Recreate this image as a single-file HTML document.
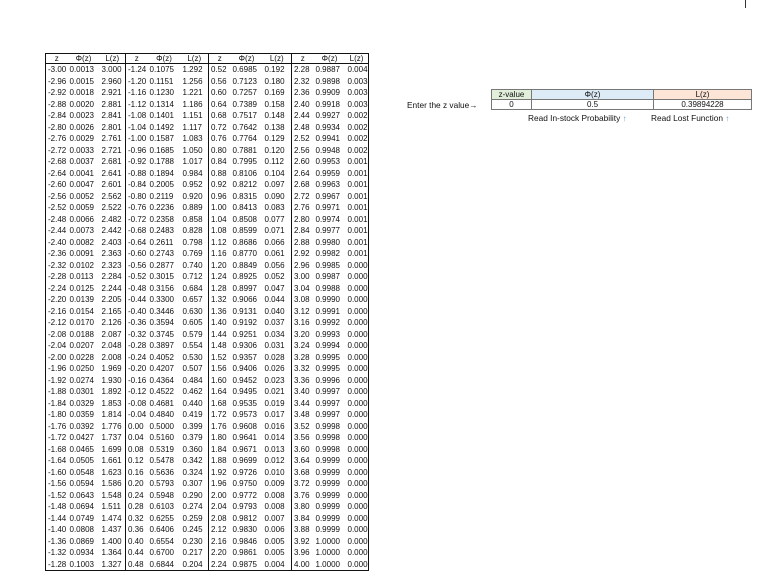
<!DOCTYPE html>
<html><head><meta charset="utf-8"><style>
body{margin:0;width:761px;height:584px;background:#fff;position:relative;overflow:hidden;font-family:"Liberation Sans",sans-serif;color:#111}
#t{position:absolute;left:45px;top:53px;border-collapse:collapse;border:1.5px solid #111;font-size:8px;table-layout:fixed}
#t td{padding:0 0 0 2px;height:11.5px;line-height:11.5px;white-space:nowrap;text-align:left}
#t tr.h td{height:9px;line-height:9px;text-align:center;border-bottom:1px solid #111;padding:0}
#t td.g{border-left:1.5px solid #111}
#w{position:absolute;left:491px;top:89px;border-collapse:collapse;font-size:8px;table-layout:fixed}
#w td{border:1px solid #777;text-align:center;height:9px;line-height:9px;padding:0}
.lab{position:absolute;font-size:8.3px;white-space:nowrap}
</style></head><body>
<div style="position:absolute;left:745px;top:0;width:1px;height:8px;background:#333"></div>
<table id="t">
<colgroup><col style="width:22px"><col style="width:32px"><col style="width:26px"><col style="width:22px"><col style="width:33px"><col style="width:28px"><col style="width:22px"><col style="width:32px"><col style="width:29px"><col style="width:22px"><col style="width:32px"><col style="width:20px"></colgroup>
<tr class="h"><td>z</td><td>Φ(z)</td><td>L(z)</td><td class="g">z</td><td>Φ(z)</td><td>L(z)</td><td class="g">z</td><td>Φ(z)</td><td>L(z)</td><td class="g">z</td><td>Φ(z)</td><td>L(z)</td></tr>
<tr><td>-3.00</td><td>0.0013</td><td>3.000</td><td class="g">-1.24</td><td>0.1075</td><td>1.292</td><td class="g">0.52</td><td>0.6985</td><td>0.192</td><td class="g">2.28</td><td>0.9887</td><td>0.004</td></tr>
<tr><td>-2.96</td><td>0.0015</td><td>2.960</td><td class="g">-1.20</td><td>0.1151</td><td>1.256</td><td class="g">0.56</td><td>0.7123</td><td>0.180</td><td class="g">2.32</td><td>0.9898</td><td>0.003</td></tr>
<tr><td>-2.92</td><td>0.0018</td><td>2.921</td><td class="g">-1.16</td><td>0.1230</td><td>1.221</td><td class="g">0.60</td><td>0.7257</td><td>0.169</td><td class="g">2.36</td><td>0.9909</td><td>0.003</td></tr>
<tr><td>-2.88</td><td>0.0020</td><td>2.881</td><td class="g">-1.12</td><td>0.1314</td><td>1.186</td><td class="g">0.64</td><td>0.7389</td><td>0.158</td><td class="g">2.40</td><td>0.9918</td><td>0.003</td></tr>
<tr><td>-2.84</td><td>0.0023</td><td>2.841</td><td class="g">-1.08</td><td>0.1401</td><td>1.151</td><td class="g">0.68</td><td>0.7517</td><td>0.148</td><td class="g">2.44</td><td>0.9927</td><td>0.002</td></tr>
<tr><td>-2.80</td><td>0.0026</td><td>2.801</td><td class="g">-1.04</td><td>0.1492</td><td>1.117</td><td class="g">0.72</td><td>0.7642</td><td>0.138</td><td class="g">2.48</td><td>0.9934</td><td>0.002</td></tr>
<tr><td>-2.76</td><td>0.0029</td><td>2.761</td><td class="g">-1.00</td><td>0.1587</td><td>1.083</td><td class="g">0.76</td><td>0.7764</td><td>0.129</td><td class="g">2.52</td><td>0.9941</td><td>0.002</td></tr>
<tr><td>-2.72</td><td>0.0033</td><td>2.721</td><td class="g">-0.96</td><td>0.1685</td><td>1.050</td><td class="g">0.80</td><td>0.7881</td><td>0.120</td><td class="g">2.56</td><td>0.9948</td><td>0.002</td></tr>
<tr><td>-2.68</td><td>0.0037</td><td>2.681</td><td class="g">-0.92</td><td>0.1788</td><td>1.017</td><td class="g">0.84</td><td>0.7995</td><td>0.112</td><td class="g">2.60</td><td>0.9953</td><td>0.001</td></tr>
<tr><td>-2.64</td><td>0.0041</td><td>2.641</td><td class="g">-0.88</td><td>0.1894</td><td>0.984</td><td class="g">0.88</td><td>0.8106</td><td>0.104</td><td class="g">2.64</td><td>0.9959</td><td>0.001</td></tr>
<tr><td>-2.60</td><td>0.0047</td><td>2.601</td><td class="g">-0.84</td><td>0.2005</td><td>0.952</td><td class="g">0.92</td><td>0.8212</td><td>0.097</td><td class="g">2.68</td><td>0.9963</td><td>0.001</td></tr>
<tr><td>-2.56</td><td>0.0052</td><td>2.562</td><td class="g">-0.80</td><td>0.2119</td><td>0.920</td><td class="g">0.96</td><td>0.8315</td><td>0.090</td><td class="g">2.72</td><td>0.9967</td><td>0.001</td></tr>
<tr><td>-2.52</td><td>0.0059</td><td>2.522</td><td class="g">-0.76</td><td>0.2236</td><td>0.889</td><td class="g">1.00</td><td>0.8413</td><td>0.083</td><td class="g">2.76</td><td>0.9971</td><td>0.001</td></tr>
<tr><td>-2.48</td><td>0.0066</td><td>2.482</td><td class="g">-0.72</td><td>0.2358</td><td>0.858</td><td class="g">1.04</td><td>0.8508</td><td>0.077</td><td class="g">2.80</td><td>0.9974</td><td>0.001</td></tr>
<tr><td>-2.44</td><td>0.0073</td><td>2.442</td><td class="g">-0.68</td><td>0.2483</td><td>0.828</td><td class="g">1.08</td><td>0.8599</td><td>0.071</td><td class="g">2.84</td><td>0.9977</td><td>0.001</td></tr>
<tr><td>-2.40</td><td>0.0082</td><td>2.403</td><td class="g">-0.64</td><td>0.2611</td><td>0.798</td><td class="g">1.12</td><td>0.8686</td><td>0.066</td><td class="g">2.88</td><td>0.9980</td><td>0.001</td></tr>
<tr><td>-2.36</td><td>0.0091</td><td>2.363</td><td class="g">-0.60</td><td>0.2743</td><td>0.769</td><td class="g">1.16</td><td>0.8770</td><td>0.061</td><td class="g">2.92</td><td>0.9982</td><td>0.001</td></tr>
<tr><td>-2.32</td><td>0.0102</td><td>2.323</td><td class="g">-0.56</td><td>0.2877</td><td>0.740</td><td class="g">1.20</td><td>0.8849</td><td>0.056</td><td class="g">2.96</td><td>0.9985</td><td>0.000</td></tr>
<tr><td>-2.28</td><td>0.0113</td><td>2.284</td><td class="g">-0.52</td><td>0.3015</td><td>0.712</td><td class="g">1.24</td><td>0.8925</td><td>0.052</td><td class="g">3.00</td><td>0.9987</td><td>0.000</td></tr>
<tr><td>-2.24</td><td>0.0125</td><td>2.244</td><td class="g">-0.48</td><td>0.3156</td><td>0.684</td><td class="g">1.28</td><td>0.8997</td><td>0.047</td><td class="g">3.04</td><td>0.9988</td><td>0.000</td></tr>
<tr><td>-2.20</td><td>0.0139</td><td>2.205</td><td class="g">-0.44</td><td>0.3300</td><td>0.657</td><td class="g">1.32</td><td>0.9066</td><td>0.044</td><td class="g">3.08</td><td>0.9990</td><td>0.000</td></tr>
<tr><td>-2.16</td><td>0.0154</td><td>2.165</td><td class="g">-0.40</td><td>0.3446</td><td>0.630</td><td class="g">1.36</td><td>0.9131</td><td>0.040</td><td class="g">3.12</td><td>0.9991</td><td>0.000</td></tr>
<tr><td>-2.12</td><td>0.0170</td><td>2.126</td><td class="g">-0.36</td><td>0.3594</td><td>0.605</td><td class="g">1.40</td><td>0.9192</td><td>0.037</td><td class="g">3.16</td><td>0.9992</td><td>0.000</td></tr>
<tr><td>-2.08</td><td>0.0188</td><td>2.087</td><td class="g">-0.32</td><td>0.3745</td><td>0.579</td><td class="g">1.44</td><td>0.9251</td><td>0.034</td><td class="g">3.20</td><td>0.9993</td><td>0.000</td></tr>
<tr><td>-2.04</td><td>0.0207</td><td>2.048</td><td class="g">-0.28</td><td>0.3897</td><td>0.554</td><td class="g">1.48</td><td>0.9306</td><td>0.031</td><td class="g">3.24</td><td>0.9994</td><td>0.000</td></tr>
<tr><td>-2.00</td><td>0.0228</td><td>2.008</td><td class="g">-0.24</td><td>0.4052</td><td>0.530</td><td class="g">1.52</td><td>0.9357</td><td>0.028</td><td class="g">3.28</td><td>0.9995</td><td>0.000</td></tr>
<tr><td>-1.96</td><td>0.0250</td><td>1.969</td><td class="g">-0.20</td><td>0.4207</td><td>0.507</td><td class="g">1.56</td><td>0.9406</td><td>0.026</td><td class="g">3.32</td><td>0.9995</td><td>0.000</td></tr>
<tr><td>-1.92</td><td>0.0274</td><td>1.930</td><td class="g">-0.16</td><td>0.4364</td><td>0.484</td><td class="g">1.60</td><td>0.9452</td><td>0.023</td><td class="g">3.36</td><td>0.9996</td><td>0.000</td></tr>
<tr><td>-1.88</td><td>0.0301</td><td>1.892</td><td class="g">-0.12</td><td>0.4522</td><td>0.462</td><td class="g">1.64</td><td>0.9495</td><td>0.021</td><td class="g">3.40</td><td>0.9997</td><td>0.000</td></tr>
<tr><td>-1.84</td><td>0.0329</td><td>1.853</td><td class="g">-0.08</td><td>0.4681</td><td>0.440</td><td class="g">1.68</td><td>0.9535</td><td>0.019</td><td class="g">3.44</td><td>0.9997</td><td>0.000</td></tr>
<tr><td>-1.80</td><td>0.0359</td><td>1.814</td><td class="g">-0.04</td><td>0.4840</td><td>0.419</td><td class="g">1.72</td><td>0.9573</td><td>0.017</td><td class="g">3.48</td><td>0.9997</td><td>0.000</td></tr>
<tr><td>-1.76</td><td>0.0392</td><td>1.776</td><td class="g">0.00</td><td>0.5000</td><td>0.399</td><td class="g">1.76</td><td>0.9608</td><td>0.016</td><td class="g">3.52</td><td>0.9998</td><td>0.000</td></tr>
<tr><td>-1.72</td><td>0.0427</td><td>1.737</td><td class="g">0.04</td><td>0.5160</td><td>0.379</td><td class="g">1.80</td><td>0.9641</td><td>0.014</td><td class="g">3.56</td><td>0.9998</td><td>0.000</td></tr>
<tr><td>-1.68</td><td>0.0465</td><td>1.699</td><td class="g">0.08</td><td>0.5319</td><td>0.360</td><td class="g">1.84</td><td>0.9671</td><td>0.013</td><td class="g">3.60</td><td>0.9998</td><td>0.000</td></tr>
<tr><td>-1.64</td><td>0.0505</td><td>1.661</td><td class="g">0.12</td><td>0.5478</td><td>0.342</td><td class="g">1.88</td><td>0.9699</td><td>0.012</td><td class="g">3.64</td><td>0.9999</td><td>0.000</td></tr>
<tr><td>-1.60</td><td>0.0548</td><td>1.623</td><td class="g">0.16</td><td>0.5636</td><td>0.324</td><td class="g">1.92</td><td>0.9726</td><td>0.010</td><td class="g">3.68</td><td>0.9999</td><td>0.000</td></tr>
<tr><td>-1.56</td><td>0.0594</td><td>1.586</td><td class="g">0.20</td><td>0.5793</td><td>0.307</td><td class="g">1.96</td><td>0.9750</td><td>0.009</td><td class="g">3.72</td><td>0.9999</td><td>0.000</td></tr>
<tr><td>-1.52</td><td>0.0643</td><td>1.548</td><td class="g">0.24</td><td>0.5948</td><td>0.290</td><td class="g">2.00</td><td>0.9772</td><td>0.008</td><td class="g">3.76</td><td>0.9999</td><td>0.000</td></tr>
<tr><td>-1.48</td><td>0.0694</td><td>1.511</td><td class="g">0.28</td><td>0.6103</td><td>0.274</td><td class="g">2.04</td><td>0.9793</td><td>0.008</td><td class="g">3.80</td><td>0.9999</td><td>0.000</td></tr>
<tr><td>-1.44</td><td>0.0749</td><td>1.474</td><td class="g">0.32</td><td>0.6255</td><td>0.259</td><td class="g">2.08</td><td>0.9812</td><td>0.007</td><td class="g">3.84</td><td>0.9999</td><td>0.000</td></tr>
<tr><td>-1.40</td><td>0.0808</td><td>1.437</td><td class="g">0.36</td><td>0.6406</td><td>0.245</td><td class="g">2.12</td><td>0.9830</td><td>0.006</td><td class="g">3.88</td><td>0.9999</td><td>0.000</td></tr>
<tr><td>-1.36</td><td>0.0869</td><td>1.400</td><td class="g">0.40</td><td>0.6554</td><td>0.230</td><td class="g">2.16</td><td>0.9846</td><td>0.005</td><td class="g">3.92</td><td>1.0000</td><td>0.000</td></tr>
<tr><td>-1.32</td><td>0.0934</td><td>1.364</td><td class="g">0.44</td><td>0.6700</td><td>0.217</td><td class="g">2.20</td><td>0.9861</td><td>0.005</td><td class="g">3.96</td><td>1.0000</td><td>0.000</td></tr>
<tr><td>-1.28</td><td>0.1003</td><td>1.327</td><td class="g">0.48</td><td>0.6844</td><td>0.204</td><td class="g">2.24</td><td>0.9875</td><td>0.004</td><td class="g">4.00</td><td>1.0000</td><td>0.000</td></tr>
</table>

<div class="lab" style="left:407px;top:100px">Enter the z value→</div>
<table id="w">
<colgroup><col style="width:40px"><col style="width:122px"><col style="width:98px"></colgroup>
<tr><td style="background:#e2efda">z-value</td><td style="background:#ddebf7">Φ(z)</td><td style="background:#fce4d6">L(z)</td></tr>
<tr><td>0</td><td>0.5</td><td>0.39894228</td></tr>
</table>
<div class="lab" style="left:528px;top:113px">Read In-stock Probability <span style="color:#5b9bd5">↑</span></div>
<div class="lab" style="left:651px;top:113px">Read Lost Function <span style="color:#5b9bd5">↑</span></div>
</body></html>
